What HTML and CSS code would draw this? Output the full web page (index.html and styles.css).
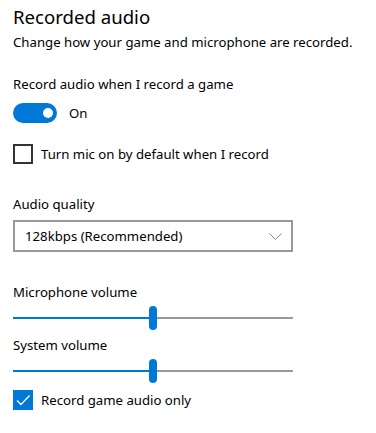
FILE: index.html
```html
<!DOCTYPE html>
<html lang="en">
<head>
    <meta charset="UTF-8">
    <meta name="viewport" content="width=device-width, initial-scale=1.0">
    <title>Recorded audio</title>
    <link rel="stylesheet" href="styles.css">
</head>
<body>
    <div class="page">
        <h1 class="title">Recorded audio</h1>
        <p class="subtitle">Change how your game and microphone are recorded.</p>

        <div class="label label-first">Record audio when I record a game</div>
        <div class="toggle-row">
            <span class="toggle"><span class="knob"></span></span>
            <span class="toggle-text">On</span>
        </div>

        <div class="check-row check-mic">
            <span class="box"></span>
            <span>Turn mic on by default when I record</span>
        </div>

        <div class="label label-quality">Audio quality</div>
        <div class="select">
            <span>128kbps (Recommended)</span>
            <svg class="chevron" width="13" height="7" viewBox="0 0 13 7">
                <path d="M0.5 0.5 L6.5 6.5 L12.5 0.5" fill="none" stroke="#888" stroke-width="1"/>
            </svg>
        </div>

        <div class="label label-mic">Microphone volume</div>
        <div class="slider">
            <span class="fill" style="width: 50%"></span>
            <span class="thumb" style="left: 50%"></span>
        </div>

        <div class="label label-sys">System volume</div>
        <div class="slider">
            <span class="fill" style="width: 50%"></span>
            <span class="thumb" style="left: 50%"></span>
        </div>

        <div class="check-row check-game">
            <span class="box checked">
                <svg width="20" height="20" viewBox="0 0 20 20">
                    <path d="M4 10.5 L8 14.5 L16.5 5.5" fill="none" stroke="#fff" stroke-width="1.3"/>
                </svg>
            </span>
            <span>Record game audio only</span>
        </div>
    </div>
</body>
</html>
```

FILE: styles.css
```css
body {
    margin: 0;
    font-family: 'Segoe UI', 'Noto Sans', sans-serif;
    font-size: 13.2px;
    color: #000;
    background: #fff;
}
.page {
    display: flex;
    flex-direction: column;
    padding: 4px 0 0 13px;
    width: 280px;
}
.title {
    margin: 0;
    font-size: 18.6px;
    font-weight: 400;
    line-height: 26px;
    white-space: nowrap;
}
.subtitle {
    margin: 2px 0 0;
    line-height: 20px;
    white-space: nowrap;
}
.label {
    line-height: 20px;
    white-space: nowrap;
}
.label-first {
    margin-top: 22px;
}
.toggle-row {
    display: flex;
    align-items: center;
    gap: 12px;
    margin-top: 9px;
    height: 20px;
}
.toggle {
    display: flex;
    align-items: center;
    justify-content: flex-end;
    width: 44px;
    height: 20px;
    border-radius: 10px;
    background: #0078d7;
    padding-right: 4px;
    box-sizing: border-box;
}
.knob {
    width: 10px;
    height: 10px;
    border-radius: 50%;
    background: #fff;
}
.check-row {
    display: flex;
    align-items: center;
    gap: 8px;
    height: 20px;
    white-space: nowrap;
}
.check-mic {
    margin-top: 21px;
}
.box {
    width: 20px;
    height: 20px;
    box-sizing: border-box;
    border: 2px solid #333;
    flex: none;
}
.box.checked {
    border: none;
    background: #0078d7;
}
.box svg {
    display: block;
}
.label-quality {
    margin-top: 30px;
}
.select {
    display: flex;
    align-items: center;
    justify-content: space-between;
    margin-top: 6px;
    height: 32px;
    box-sizing: border-box;
    border: 2px solid #999;
    padding: 0 9px 0 10px;
}
.chevron {
    display: block;
}
.label-mic {
    margin-top: 30px;
}
.label-sys {
    margin-top: 5px;
}
.slider {
    position: relative;
    height: 24px;
    margin-top: 4px;
}
.slider::before {
    content: "";
    position: absolute;
    left: 0;
    right: 0;
    top: 11px;
    height: 2px;
    background: #999;
}
.fill {
    position: absolute;
    left: 0;
    top: 11px;
    height: 2px;
    background: #0078d7;
}
.thumb {
    position: absolute;
    top: 0;
    width: 8px;
    height: 24px;
    margin-left: -4px;
    border-radius: 4px;
    background: #0078d7;
}
.check-game {
    margin-top: 7px;
}
```
